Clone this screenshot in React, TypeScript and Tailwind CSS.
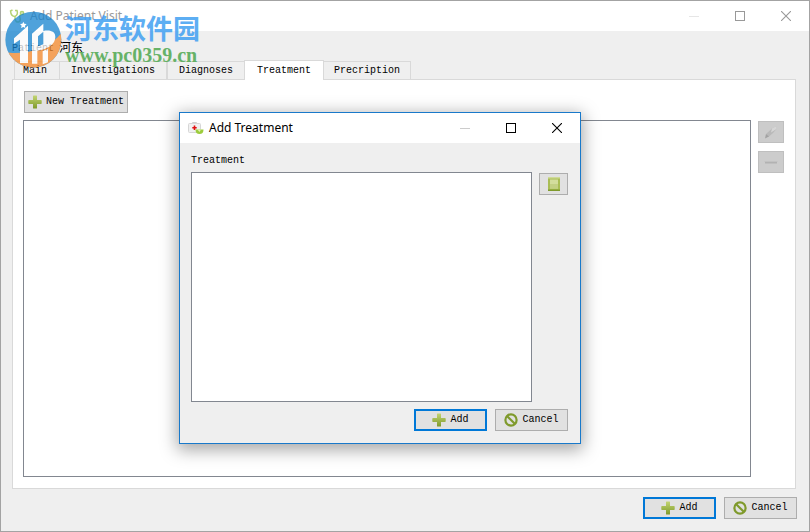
import type { ReactNode } from "react";

const tabs = [
  { name: "Main", className: "-ml-px h-[18px] pr-3 pl-2" },
  { name: "Investigations", className: "-ml-px h-[18px] px-[11px]" },
  { name: "Diagnoses", className: "h-[18px] px-[11px]" },
  { name: "Treatment", className: "relative z-10 -mx-px -mb-px h-5 bg-white px-3" },
  { name: "Precription", className: "h-[18px] px-[10px]" },
];

const PlusIcon = () => (
  <svg viewBox="0 0 14 14" className="size-[14px] shrink-0" aria-hidden="true">
    <defs>
      <linearGradient id="plus" x1="0" y1="0" x2="0" y2="1">
        <stop offset="0" stopColor="#c3d573" />
        <stop offset="1" stopColor="#7f9a2c" />
      </linearGradient>
    </defs>
    <path
      d="M5.500 .5h3q.5 0 .5 .5v4h4q.7 0 .7 .7v2.600q0 .7-.7 .7H9v4q0 .5-.5 .5h-3q-.5 0-.5-.5V9H1q-.7 0-.7-.7V5.700Q.3 5 1 5h4V1q0-.5 .5-.5z"
      fill="url(#plus)"
    />
  </svg>
);

const BanIcon = () => (
  <svg viewBox="0 0 14 14" className="size-[14px] shrink-0" fill="none" stroke="#7f9a2c" strokeWidth="2.2" aria-hidden="true">
    <circle cx="7" cy="7" r="5.6" />
    <path d="M3.2 3.2l7.6 7.6" />
  </svg>
);

const StethoscopeIcon = () => (
  <svg viewBox="0 0 16 16" className="size-4 shrink-0" fill="none" stroke="#b4d274" strokeWidth="1.5" aria-hidden="true">
    <path d="M3.500 2L1.500 3q.5 5.500 4.500 5.500q3.500-2 2-6L6 2.500M6 8.500v2.500q1 3.500 3.500 3q2.500-1 1.500-4t1.500-3.500" />
    <circle cx="13" cy="5" r="1.600" fill="#e5edcf" />
  </svg>
);

const KitIcon = () => (
  <svg viewBox="0 0 16 14" className="h-[14px] w-4 shrink-0" aria-hidden="true">
    <path d="M4.500 3V1.500h4V3" fill="none" stroke="#cfcfcf" />
    <rect x=".5" y="2.500" width="12" height="9" rx="1" fill="#f1f1f1" stroke="#d6d6d6" />
    <path d="M6.500 4.500v4.500M4.300 6.700h4.400" stroke="#e01010" strokeWidth="1.600" />
    <path d="M7.500 8.500h8q0 4.500-4 4.500t-4-4.500z" fill="#9ccc3c" />
    <path d="M9.500 8.500l2 2.500 1.500-2.500z" fill="#e2f2b4" />
  </svg>
);

const NoteIcon = () => (
  <svg viewBox="0 0 12 14" className="h-[14px] w-3 shrink-0" aria-hidden="true">
    <rect x="0" y="1" width="12" height="13" fill="#a9bd55" />
    <path d="M0 12.500h12V14H0z" fill="#7f9a2c" />
    <rect x="2" y="2.500" width="8" height="9" fill="#d3dd9d" />
    <path d="M2 7h8v4.500H2z" fill="#c3d085" />
    <path d="M0 0h12v1.500H0z" fill="#cfda98" />
  </svg>
);

const PencilIcon = () => (
  <svg viewBox="0 0 14 14" className="size-[14px] shrink-0" aria-hidden="true">
    <path d="M2 9l6-5.500L12.500 1v3L9 8l-4.500 4z" fill="#b9b9b9" />
    <path d="M8 3.500L12.500 1v3L7 7.500z" fill="#d6d6d6" />
    <path d="M1 13.500L2 9l3 2.500z" fill="#a2a2a2" />
  </svg>
);

const MinusIcon = () => (
  <svg viewBox="0 0 14 14" className="size-[14px] shrink-0" aria-hidden="true">
    <path d="M.5 6h13v1H.5z" fill="#c2c2c2" />
    <path d="M1 7h12v1.500H1z" fill="#b2b2b2" />
  </svg>
);

interface TitleBarProps {
  title: string;
  icon: ReactNode;
  active?: boolean;
}

const TitleBar = ({ title, icon, active }: TitleBarProps) => (
  <header
    className={
      active
        ? "flex h-[30px] items-center bg-white pl-2 text-black"
        : "flex h-[30px] items-center bg-white pl-2 text-[#999]"
    }
  >
    {icon}
    <h1 className="ml-[5px] flex-1 font-['Noto_Sans','Open_Sans',sans-serif] text-[12px] leading-4">{title}</h1>
    <button type="button" aria-label="Minimize" className="flex h-full w-[46px] items-center justify-center">
      <svg viewBox="0 0 10 10" className={active ? "size-[10px] text-[#ccc]" : "size-[10px] text-[#e6e6e6]"}>
        <path d="M0 5.500h10" stroke="currentColor" />
      </svg>
    </button>
    <button type="button" aria-label="Maximize" className="flex h-full w-[46px] items-center justify-center">
      <svg viewBox="0 0 10 10" className="size-[10px]">
        <rect x=".5" y=".5" width="9" height="9" fill="none" stroke="currentColor" />
      </svg>
    </button>
    <button type="button" aria-label="Close" className="flex h-full w-[46px] items-center justify-center">
      <svg viewBox="0 0 10 10" className="size-[10px]">
        <path d="M0 0l10 10M10 0L0 10" stroke="currentColor" strokeWidth="1.100" />
      </svg>
    </button>
  </header>
);

const DialogButtons = () => (
  <div className="flex justify-end gap-2">
    <button
      type="button"
      className="flex h-[22px] w-[73px] items-center justify-center gap-1 border-2 border-[#0078d7] bg-[#e1e1e1]"
    >
      <PlusIcon />
      Add
    </button>
    <button
      type="button"
      className="flex h-[22px] w-[73px] items-center justify-center gap-1 border border-[#adadad] bg-[#e1e1e1]"
    >
      <BanIcon />
      Cancel
    </button>
  </div>
);

const Watermark = () => (
  <div className="pointer-events-none absolute top-2 left-[3px] flex gap-px">
    <svg viewBox="0 0 180 180" className="size-[60px] opacity-75" aria-hidden="true">
      <defs>
        <clipPath id="disc">
          <circle cx="88" cy="92" r="84" />
        </clipPath>
      </defs>
      <g clipPath="url(#disc)">
        <path d="M0 0h180v180H0z" fill="#1583cf" />
        <path d="M0 128C50 142 140 122 180 62v118H0z" fill="#f6892a" />
        {/* numeral one and the letter P */}
        <path d="M30 88L72 50v112H48V92L30 104z" fill="#fff" />
        <path d="M84 164V74l34-30v22c22-4 36 2 36 18 0 22-22 36-54 42v38z" fill="#fff" />
        <path d="M102 82l16-14v38l-16 6z" fill="#1583cf" />
        <path d="M116 166v-40l16-6v40z" fill="#fff" />
      </g>
      <path d="M58 38l3 6 7 1-5 5 1 7-6-3-7 3 2-7-5-5 7-1z" fill="#fff" />
    </svg>
    <div className="flex flex-col pt-1 opacity-85">
      <span className="font-['Noto_Sans_CJK_SC',sans-serif] text-[27px] leading-[30px] font-bold text-[#41a0f2]">
        河东软件园
      </span>
      <span className="font-['Liberation_Serif',serif] text-[20px] leading-6 font-bold text-[#4fa850]">
        www.pc0359.cn
      </span>
    </div>
  </div>
);

const AddTreatmentDialog = () => (
  <section
    role="dialog"
    aria-label="Add Treatment"
    className="absolute top-[111px] left-[178px] w-[402px] border border-[#1979ca] bg-[#efefef] shadow-[0_4px_16px_2px_rgba(0,0,0,0.35)]"
  >
    <TitleBar title="Add Treatment" icon={<KitIcon />} active />
    <div className="px-[11px] pt-[10px] pb-3">
      <label htmlFor="treatment" className="block leading-4">
        Treatment
      </label>
      <div className="mt-[3px] flex items-start gap-[7px] pr-px">
        <textarea id="treatment" className="h-[230px] flex-1 resize-none border border-[#828790] bg-white p-1" />
        <button
          type="button"
          aria-label="Templates"
          className="mt-px flex h-[22px] w-[29px] items-center justify-center border border-[#adadad] bg-[#e1e1e1]"
        >
          <NoteIcon />
        </button>
      </div>
      <div className="pt-[7px] pr-px">
        <DialogButtons />
      </div>
    </div>
  </section>
);

const App = () => {
  return (
    <div className="relative flex min-h-screen flex-col border border-[#a3a3a3] bg-[#efefef] font-['Liberation_Mono','Noto_Sans_CJK_SC',monospace] text-[10px] leading-4 text-black">
      <TitleBar title="Add Patient Visit" icon={<StethoscopeIcon />} />
      <main className="flex flex-1 flex-col pt-[10px] pr-3 pb-3 pl-[11px]">
        <p className="flex items-center gap-[5px]">
          Patient <span className="text-[12px]">河东</span>
        </p>

        {/* TABS */}
        <div role="tablist" className="mt-0.5 flex h-5 items-end pl-[3px]">
          {tabs.map(({ name, className }) => (
            <button
              key={name}
              type="button"
              role="tab"
              aria-selected={name === "Treatment"}
              className={`border border-b-0 border-[#d9d9d9] ${className}`}
            >
              {name}
            </button>
          ))}
        </div>

        {/* TREATMENT PANEL */}
        <div role="tabpanel" className="mr-px flex flex-1 flex-col border border-[#d9d9d9] bg-white px-[11px] py-[11px] pl-[10px]">
          <button
            type="button"
            className="ml-px flex h-[22px] w-[104px] items-center justify-center gap-1 border border-[#adadad] bg-[#e1e1e1]"
          >
            <PlusIcon />
            New Treatment
          </button>
          <div className="mt-[7px] flex flex-1 gap-[7px]">
            <div role="listbox" aria-label="Treatments" className="flex-1 border border-[#828790]" />
            <div className="flex flex-col gap-2 pt-px">
              <button
                type="button"
                disabled
                aria-label="Edit"
                className="flex h-[22px] w-[26px] items-center justify-center border border-[#bfbfbf] bg-[#ccc]"
              >
                <PencilIcon />
              </button>
              <button
                type="button"
                disabled
                aria-label="Remove"
                className="flex h-[22px] w-[26px] items-center justify-center border border-[#bfbfbf] bg-[#ccc]"
              >
                <MinusIcon />
              </button>
            </div>
          </div>
        </div>

        <div className="pt-2">
          <DialogButtons />
        </div>
      </main>

      <Watermark />
      <AddTreatmentDialog />
    </div>
  );
};

export default App;
